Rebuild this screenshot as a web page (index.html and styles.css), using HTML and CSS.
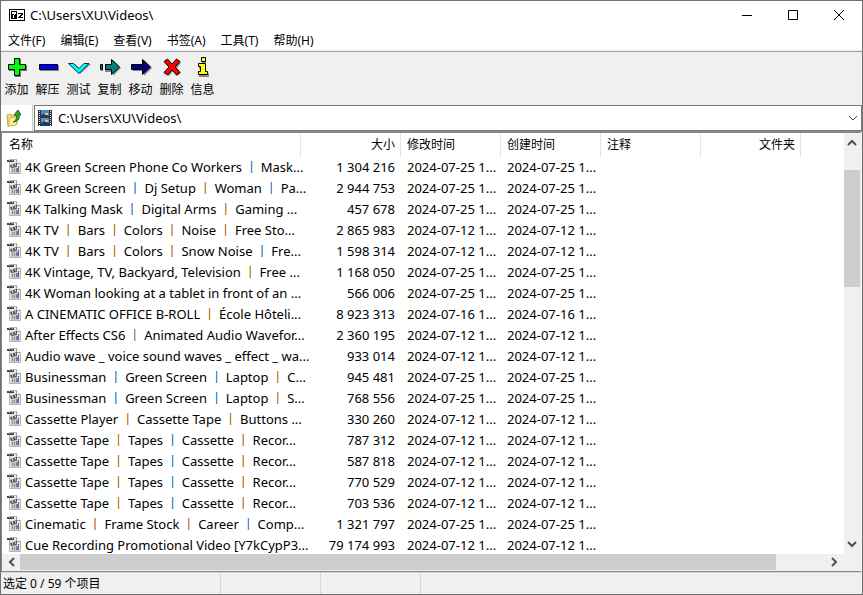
FILE: index.html
```
<!DOCTYPE html>
<html lang="zh-CN">
<head>
<meta charset="utf-8">
<title>C:\Users\XU\Videos\</title>
<link rel="stylesheet" href="styles.css">
</head>
<body>
<svg class="defs" aria-hidden="true">
  <symbol id="media" viewBox="0 0 14 16">
    <path d="M2.500 .5h7l4 4v10h-11z" fill="#e8e8e8" stroke="#b4b4b4"/>
    <path d="M9.500 .5v4h4" fill="#fff" stroke="#a0a0a0"/>
    <path d="M0 1h7v2H0z" fill="#444"/><path d="M2 1h1v1H2zM5 1h1v1H5z" fill="#aaa"/>
    <path d="M3 6l7-2v4l-6 1z" fill="#555"/><path d="M5 5l1 3M8 5l1 2" stroke="#ddd"/>
    <path d="M4 9h8v5H4z" fill="#c8c8c8"/><path d="M5 10h1v3H5z" fill="#e66"/><path d="M7 10h1v3H7z" fill="#5b5"/><path d="M9 9h2v4H9z" fill="#77c"/><path d="M11 7h1v6h-1z" fill="#666"/>
  </symbol>
</svg>
<div class="window">
  <header class="titlebar">
    <svg class="logo" width="16" height="12" viewBox="0 0 16 12" shape-rendering="crispEdges"><path d="M0 0h16v12H0z"/><path d="M1 1h14v10H1z" fill="#fff"/><path d="M2 2h6v8H2z"/><path d="M3 3h4v2H6v1H5v3H4V6h1V5H3z" fill="#fff"/><path d="M9 4h5v2h-1v1h-1v1h2v1H9V8h1V7h1V6h1V5H9z"/></svg>
    <h1>C:\Users\XU\Videos\</h1>
    <div class="controls">
      <button aria-label="最小化"><svg width="12" height="12" viewBox="0 0 12 12"><path d="M1 6.500h10" stroke="#000"/></svg></button>
      <button aria-label="最大化"><svg width="12" height="12" viewBox="0 0 12 12"><path d="M1.500 1.500h9v9h-9z" fill="none" stroke="#000"/></svg></button>
      <button aria-label="关闭"><svg width="12" height="12" viewBox="0 0 12 12"><path d="M1 1l10 10M11 1L1 11" stroke="#000"/></svg></button>
    </div>
  </header>
  <nav class="menu"><button>文件(F)</button><button>编辑(E)</button><button>查看(V)</button><button>书签(A)</button><button>工具(T)</button><button>帮助(H)</button></nav>
  <div class="toolbar">
    <button><svg width="24" height="24" viewBox="0 0 24 24"><path d="M10 4h6v6h6v6h-6v6h-6v-6H4v-6h6z" fill="#777"/><path d="M9.500 3.500h5v6h6v5h-6v6h-5v-6h-6v-5h6z" fill="#0f0" stroke="#000"/></svg>添加</button>
    <button><svg width="24" height="24" viewBox="0 0 24 24"><path d="M4 10h19v6H4z" fill="#888"/><path d="M3.500 9.500h18v5h-18z" fill="#00f" stroke="#000"/></svg>解压</button>
    <button><svg width="24" height="24" viewBox="0 0 24 24"><path d="M2 9h6l5 5 5-5h6L13 19z" fill="#888"/><path d="M1.500 8.500h5l5.500 5 5-5h5L12 18.500z" fill="#0ff" stroke="#000" stroke-width=".8"/></svg>测试</button>
    <button><svg width="24" height="24" viewBox="0 0 24 24"><path d="M3 9h2v7H3zM7 9h8V5l8 8-8 8v-4H7z" fill="#888"/><path d="M2.500 9.500h2v5h-2zM7.500 9.500h6v-5l8 7.500-8 7.500v-5h-6z" fill="#008080" stroke="#000"/></svg>复制</button>
    <button><svg width="24" height="24" viewBox="0 0 24 24"><path d="M4 10h11V5l8 8-8 8v-5H4z" fill="#888"/><path d="M2.500 9.500h11v-5l8 7.500-8 7.500v-5h-11z" fill="#000080" stroke="#000"/></svg>移动</button>
    <button><svg width="24" height="24" viewBox="0 0 24 24"><path d="M5 8l4-3 4 5 4-5 4 3-4 5 4 5-4 3-4-5-4 5-4-3 5-5z" fill="#888"/><path d="M4 6.500L7.500 4l4.500 5 4.500-5L20 6.500 15 12l5 5.500-3.500 2.500-4.500-5-4.500 5L4 17.500 9 12z" fill="#f00" stroke="#000"/></svg>删除</button>
    <button><svg width="24" height="24" viewBox="0 0 24 24"><path d="M11 3h4v5h-4zM8 10h7v8h3v4H8v-4h3v-4H8z" fill="#888"/><path d="M10.500 2.500h4v4h-4zM7.500 8.500h7v8h2v3h-9v-3h2v-5h-2z" fill="#ff0" stroke="#000"/></svg>信息</button>
  </div>
  <div class="address">
    <button class="up" aria-label="上一级"><svg width="16" height="18" viewBox="0 0 16 18"><path d="M1 6l4-1 1 2 5-1v9l-9 2z" fill="#f5dc78" stroke="#c9a53d"/><path d="M4 9l9-2-3 9-8 1z" fill="#fff0a6" stroke="#cfae48"/><path d="M7 13c3-1 4-4 3-7H8l4-5 3 5h-2c1 4-2 7-6 7z" fill="#28a428" stroke="#137013"/></svg></button>
    <div class="combo">
      <svg width="14" height="16" viewBox="0 0 14 16"><path d="M0 0h14v16H0z" fill="#333"/><path d="M3 0h8v7H3z" fill="#4a84c8"/><path d="M3 8h8v8H3z" fill="#5a92d0"/><path d="M3 5l3-1 5 2v2H3zM3 13l4-2 4 2v3H3z" fill="#173d72"/><path d="M7 3h3v2H7zM7 10h3v2H7z" fill="#efc84a"/><path d="M1.500 1v15M12.500 1v15" stroke="#ddd" stroke-dasharray="1 1"/></svg>
      <input aria-label="路径" value="C:\Users\XU\Videos\">
      <button aria-label="展开"><svg width="10" height="6" viewBox="0 0 10 6"><path d="M1 1l4 4 4-4" fill="none" stroke="#444"/></svg></button>
    </div>
  </div>
  <main class="pane">
    <div class="list">
      <table>
        <colgroup><col class="name"><col class="col"><col class="col"><col class="col"><col class="col"><col class="col"><col></colgroup>
        <thead><tr><th>名称</th><th class="num">大小</th><th>修改时间</th><th>创建时间</th><th>注释</th><th class="num">文件夹</th><td></td></tr></thead>
        <tbody id="files"></tbody>
      </table>
    </div>
    <div class="vbar"><svg width="16" height="16" viewBox="0 0 16 16"><path d="M4 10l4-4 4 4" fill="none" stroke="#505050" stroke-width="2"/></svg><div class="vtrack"><div class="vthumb"></div></div><svg width="16" height="16" viewBox="0 0 16 16"><path d="M4 6l4 4 4-4" fill="none" stroke="#505050" stroke-width="2"/></svg></div>
    <div class="hbar"><svg width="16" height="16" viewBox="0 0 16 16"><path d="M10 4L6 8l4 4" fill="none" stroke="#505050" stroke-width="2"/></svg><div class="htrack"><div class="hthumb"></div></div><svg width="16" height="16" viewBox="0 0 16 16"><path d="M6 4l4 4-4 4" fill="none" stroke="#505050" stroke-width="2"/></svg></div>
  </main>
  <footer class="status"><span class="count">选定 0 / 59 个项目</span><span></span><span></span></footer>
</div>
<script src="files.js"></script>
</body>
</html>
```
FILE: styles.css
```
* { box-sizing: border-box; }
body { margin: 0; font: 12px/18px "Noto Sans", "Noto Sans CJK SC", sans-serif; color: #000; }
button, input { font: inherit; color: inherit; border: 0; padding: 0; background: none; }
svg { display: block; flex: none; }
.defs { position: absolute; width: 0; height: 0; }
.window { height: 100vh; display: flex; flex-direction: column; border: 1px solid #707070; background: #f0f0f0; overflow: hidden; }
.titlebar { display: flex; align-items: center; height: 28px; flex: none; background: #fff; padding-left: 8px; }
.titlebar h1 { margin: 0 0 0 5px; font-size: 13px; font-weight: 400; flex: 1; }
.controls { display: flex; }
.controls button { width: 46px; height: 28px; display: grid; place-items: center; }
.menu { display: flex; gap: 15px; height: 22px; flex: none; background: #fff; padding: 2px 7px 0; border-bottom: 1px solid #f0f0f0; }
.toolbar { display: flex; flex: none; height: 54px; border-top: 1px solid #a0a0a0; padding-top: 3px; }
.toolbar button { width: 31px; display: flex; flex-direction: column; align-items: center; gap: 2px; }
.address { display: flex; flex: none; height: 26px; gap: 1px; }
.up { width: 32px; background: #fff; border-right: 1px solid #ccc; padding-left: 5px; }
.combo { flex: 1; display: flex; align-items: center; gap: 6px; border: 1px solid #7a7a7a; background: #fff; padding: 0 3px; }
.combo input { flex: 1; min-width: 0; font-size: 13px; outline: 0; }
.pane { flex: 1; min-height: 0; display: grid; grid-template: minmax(0, 1fr) 16px / minmax(0, 1fr) 16px; border: 1px solid #828790; border-width: 2px 2px 1px 1px; border-right-color: #f0f0f0; background: #f0f0f0; padding-bottom: 1px; }
.list { overflow: hidden; background: #fff; }
table { width: 100%; table-layout: fixed; border-collapse: separate; border-spacing: 0; font-size: 13px; }
.name { width: 299px; }
.col { width: 100px; }
th, td { padding: 0 6px; height: 21px; line-height: 21px; text-align: left; font-weight: 400; white-space: nowrap; }
th { height: 24px; padding-bottom: 2px; border-right: 1px solid #e5e5e5; font-size: 12px; }
th:first-child { padding-left: 7px; }
td:first-child { padding: 0 0 0 5px; }
.num { text-align: right; padding-right: 5px; }
td.num { padding-right: 6px; }
.file { display: flex; align-items: center; gap: 4px; }
.file svg { margin-bottom: 2px; }
.file span { white-space: pre; }
.bar { font-size: 12px; font-weight: 700; color: #b86a14; text-shadow: 0 0 currentColor, 0 0 currentColor; }
.bar.blue { color: #1f78c8; }
.vbar { display: flex; flex-direction: column; padding: 2px 0; }
.vtrack { flex: 1; padding-top: 19px; }
.vthumb { height: 32%; background: #cdcdcd; }
.hbar { display: flex; grid-column: 1; padding: 0 2px; }
.htrack { flex: 1; display: flex; padding-right: 6%; }
.hthumb { flex: 1; background: #cdcdcd; }
.status { display: flex; flex: none; height: 22px; border-top: 1px solid #d7d7d7; }
.status span { width: 100px; border-right: 1px solid #d7d7d7; }
.status .count { width: 220px; padding: 2px 0 0 2px; }
```
FILE: files.js
```
// Name (b / o mark a blue or amber divider), size, date.
const files = [
  ["4K Green Screen Phone Co Workers {b} Mask...", "1 304 216", "25"],
  ["4K Green Screen {b} Dj Setup {o} Woman {b} Pa...", "2 944 753", "25"],
  ["4K Talking Mask {b} Digital Arms {o} Gaming ...", "457 678", "25"],
  ["4K TV {o} Bars {o} Colors {o} Noise {o} Free Sto...", "2 865 983", "12"],
  ["4K TV {o} Bars {o} Colors {o} Snow Noise {b} Fre...", "1 598 314", "12"],
  ["4K Vintage, TV, Backyard, Television {o} Free ...", "1 168 050", "25"],
  ["4K Woman looking at a tablet in front of an ...", "566 006", "25"],
  ["A CINEMATIC OFFICE B-ROLL {o} École Hôteli...", "8 923 313", "16"],
  ["After Effects CS6 {o} Animated Audio Wavefor...", "2 360 195", "12"],
  ["Audio wave _ voice sound waves _ effect _ wa...", "933 014", "12"],
  ["Businessman {b} Green Screen {b} Laptop {o} C...", "945 481", "25"],
  ["Businessman {b} Green Screen {b} Laptop {o} S...", "768 556", "25"],
  ["Cassette Player {o} Cassette Tape {o} Buttons ...", "330 260", "12"],
  ["Cassette Tape {o} Tapes {b} Cassette {o} Recor...", "787 312", "12"],
  ["Cassette Tape {o} Tapes {b} Cassette {o} Recor...", "587 818", "12"],
  ["Cassette Tape {o} Tapes {b} Cassette {o} Recor...", "770 529", "12"],
  ["Cassette Tape {o} Tapes {b} Cassette {o} Recor...", "703 536", "12"],
  ["Cinematic {o} Frame Stock {o} Career {b} Comp...", "1 321 797", "25"],
  ["Cue Recording Promotional Video [Y7kCypP3...", "79 174 993", "12"]
];
document.getElementById("files").innerHTML = files.map(([name, size, day]) => {
  const label = name.replace(/\{b\}/g, '<span class="bar blue">｜</span>').replace(/\{o\}/g, '<span class="bar">｜</span>');
  const date = `2024-07-${day} 1...`;
  return `<tr><td><div class="file"><svg width="14" height="16"><use href="#media"/></svg><span>${label}</span></div></td><td class="num">${size}</td><td>${date}</td><td>${date}</td><td></td><td></td><td></td></tr>`;
}).join("");
```
